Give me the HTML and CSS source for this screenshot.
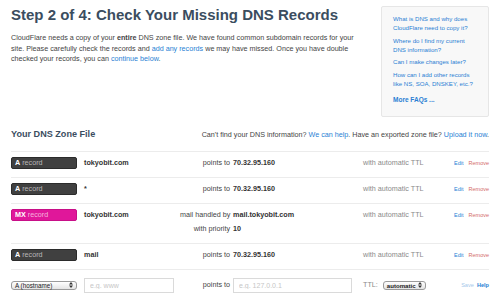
FILE: index.html
```html
<!DOCTYPE html>
<html lang="en">
<head>
    <meta charset="UTF-8">
    <meta name="viewport" content="width=device-width, initial-scale=1.0">
    <title>CloudFlare - Check Your Missing DNS Records</title>
    <link rel="stylesheet" href="styles.css">
</head>
<body>
    <div class="top">
        <div class="intro">
            <h1>Step 2 of 4: Check Your Missing DNS Records</h1>
            <p>CloudFlare needs a copy of your <b>entire</b> DNS zone file. We have found common subdomain records for your site. Please carefully check the records and <a href="#">add any records</a> we may have missed. Once you have double checked your records, you can <a href="#">continue below</a>.</p>
        </div>
        <aside class="faq">
            <ul>
                <li><a href="#">What is DNS and why does CloudFlare need to copy it?</a></li>
                <li><a href="#">Where do I find my current DNS information?</a></li>
                <li><a href="#">Can I make changes later?</a></li>
                <li><a href="#">How can I add other records like NS, SOA, DNSKEY, etc.?</a></li>
            </ul>
            <a href="#" class="more">More FAQs ...</a>
        </aside>
    </div>

    <div class="zone-head">
        <h2>Your DNS Zone File</h2>
        <p>Can't find your DNS information? <a href="#">We can help</a>. Have an exported zone file? <a href="#">Upload it now</a>.</p>
    </div>

    <div class="records">
        <div class="record">
            <span class="badge"><b>A</b> record</span>
            <span class="name">tokyobit.com</span>
            <div class="detail">
                <div class="line"><span class="label">points to</span><b class="value">70.32.95.160</b></div>
            </div>
            <span class="ttl">with automatic TTL</span>
            <span class="actions"><a href="#">Edit</a><a href="#" class="remove">Remove</a></span>
        </div>

        <div class="record">
            <span class="badge"><b>A</b> record</span>
            <span class="name">*</span>
            <div class="detail">
                <div class="line"><span class="label">points to</span><b class="value">70.32.95.160</b></div>
            </div>
            <span class="ttl">with automatic TTL</span>
            <span class="actions"><a href="#">Edit</a><a href="#" class="remove">Remove</a></span>
        </div>

        <div class="record">
            <span class="badge mx"><b>MX</b> record</span>
            <span class="name">tokyobit.com</span>
            <div class="detail">
                <div class="line"><span class="label">mail handled by</span><b class="value">mail.tokyobit.com</b></div>
                <div class="line"><span class="label">with priority</span><b class="value">10</b></div>
            </div>
            <span class="ttl">with automatic TTL</span>
            <span class="actions"><a href="#">Edit</a><a href="#" class="remove">Remove</a></span>
        </div>

        <div class="record">
            <span class="badge"><b>A</b> record</span>
            <span class="name">mail</span>
            <div class="detail">
                <div class="line"><span class="label">points to</span><b class="value">70.32.95.160</b></div>
            </div>
            <span class="ttl">with automatic TTL</span>
            <span class="actions"><a href="#">Edit</a><a href="#" class="remove">Remove</a></span>
        </div>

        <form class="record new">
            <div class="select type-select">
                <span>A (hostname)</span>
                <svg width="4" height="6" viewBox="0 0 4 6"><path d="M2 0 L4 2.4 H0 Z M2 6 L4 3.6 H0 Z" fill="#333"/></svg>
            </div>
            <div class="name"><input type="text" class="field host" placeholder="e.g. www"></div>
            <div class="detail">
                <div class="line"><span class="label">points to</span><input type="text" class="field target" placeholder="e.g. 127.0.0.1"></div>
            </div>
            <div class="ttl">
                <span>TTL:</span>
                <div class="select ttl-select">
                    <span>automatic</span>
                    <svg width="4" height="6" viewBox="0 0 4 6"><path d="M2 0 L4 2.4 H0 Z M2 6 L4 3.6 H0 Z" fill="#333"/></svg>
                </div>
            </div>
            <span class="actions save-help"><a href="#" class="save">Save</a><a href="#" class="help">Help</a></span>
        </form>
    </div>
</body>
</html>
```

FILE: styles.css
```css
:root {
    --title-color: #3b4d5f;
    --text-color: #444;
    --link-color: #2a7fd4;
    --muted-color: #8a8a8a;
    --rule-color: #ececec;
}

* {
    margin: 0;
    padding: 0;
    box-sizing: border-box;
}

body {
    font-family: "Liberation Sans", Arial, sans-serif;
    font-size: 7.2px;
    color: var(--text-color);
    background-color: #fff;
    padding: 6px 11px 0;
}

a {
    color: var(--link-color);
    text-decoration: none;
}

.top {
    display: flex;
    justify-content: space-between;
    align-items: flex-start;
}

.intro {
    width: 350px;
}

h1 {
    font-size: 15px;
    line-height: 18px;
    color: var(--title-color);
}

.intro p {
    margin-top: 9px;
    line-height: 10.5px;
}

.faq {
    width: 108px;
    background-color: #f8f8f8;
    border: 1px solid #e6e6e6;
    border-radius: 2px;
    padding: 7px 12px 12px 11px;
    font-size: 6.1px;
    line-height: 9px;
}

.faq ul {
    list-style: none;
}

.faq li + li {
    margin-top: 3.5px;
}

.faq .more {
    display: block;
    margin-top: 7px;
    font-size: 6.5px;
    font-weight: bold;
}

.zone-head {
    display: flex;
    justify-content: space-between;
    align-items: baseline;
    margin-top: 11px;
    padding-bottom: 10px;
}

.zone-head h2 {
    font-size: 9.1px;
    line-height: 12px;
    color: var(--title-color);
}

.zone-head p {
    line-height: 12px;
}

.record {
    display: flex;
    align-items: flex-start;
    border-top: 1px solid var(--rule-color);
    padding: 5.5px 0 7.5px;
    line-height: 12px;
}

.badge {
    width: 66px;
    height: 12px;
    margin-right: 7px;
    padding-left: 3px;
    background-color: #404040;
    border: 1px solid #2b2b2b;
    border-radius: 2px;
    color: #b8b8b8;
    line-height: 10px;
}

.badge b {
    color: #fff;
}

.badge.mx {
    background-color: #e0179a;
    border-color: #c80f88;
    color: #f7b3de;
}

.name {
    width: 96px;
    font-weight: bold;
    color: #333;
}

.detail {
    width: 183px;
}

.line {
    display: flex;
    align-items: center;
}

.line + .line {
    margin-top: 2px;
}

.label {
    width: 50px;
    margin-right: 3px;
    text-align: right;
    white-space: nowrap;
}

.value {
    color: #333;
}

.ttl {
    width: 91px;
    color: var(--muted-color);
}

.actions {
    flex: 1;
    display: flex;
    justify-content: space-between;
    font-size: 5.5px;
}

.remove {
    color: #d36b6b;
}

/* new record row */
.record.new {
    align-items: center;
    padding: 8px 0 6px;
}

.select {
    display: flex;
    justify-content: space-between;
    align-items: center;
    height: 9px;
    padding: 0 3px;
    border: 1px solid #9a9a9a;
    border-radius: 3px;
    background: linear-gradient(#fff, #e4e4e4);
    color: #222;
    font-size: 6.3px;
    line-height: 7px;
}

.type-select {
    width: 66px;
    margin-right: 7px;
}

.field {
    height: 15px;
    padding-left: 5px;
    border: 1px solid #dadada;
    font-family: inherit;
    font-size: 7px;
    color: #333;
    outline: none;
}

.field::placeholder {
    color: #c6c6c6;
}

.host {
    width: 90px;
}

.target {
    width: 119px;
}

.record.new .ttl {
    display: flex;
    align-items: center;
    font-size: 7.2px;
}

.ttl-select {
    width: 43px;
    margin-left: 5px;
    font-size: 6.1px;
    font-weight: bold;
}

.save-help {
    justify-content: flex-end;
    gap: 3px;
    font-size: 5.6px;
}

.save {
    color: #a6c8ea;
}

.help {
    font-weight: bold;
}
```
